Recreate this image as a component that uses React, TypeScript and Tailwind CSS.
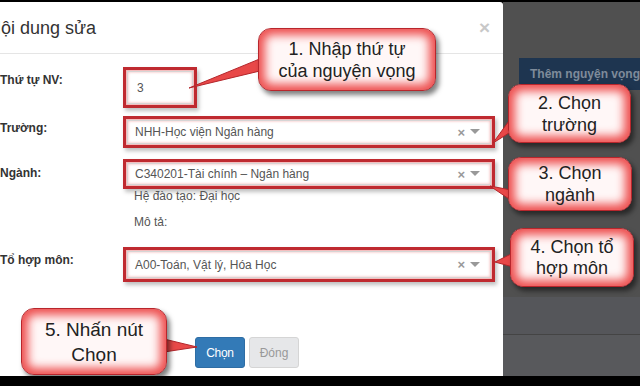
import React from "react";

function RedBox({ className, children }: { className: string; children?: React.ReactNode }) {
  return (
    <div
      className={
        "border-[3px] border-[#bf2a30] bg-white shadow-[inset_0_0_3px_2px_#f3b4b4,2px_3px_4px_rgba(0,0,0,0.25)] " +
        className
      }
    >
      {children}
    </div>
  );
}

function Select({ value, h }: { value: string; h: string }) {
  return (
    <RedBox className={"w-[372px] p-[1px] " + h}>
      <div className="h-full border border-[#d5d5d5] flex items-center pl-[7px] pr-[10px]">
        <span className="flex-1 text-[12px] text-[#555] whitespace-nowrap">{value}</span>
        <span className="text-[13px] font-bold text-[#999] leading-none mr-[5px]">×</span>
        <svg width="10" height="6" viewBox="0 0 10 6">
          <polygon points="0,0 10,0 5,5" fill="#999" />
        </svg>
      </div>
    </RedBox>
  );
}

function Callout({
  className,
  lines,
  text,
}: {
  className: string;
  lines: string[];
  text: string;
}) {
  return (
    <div
      className={
        "absolute z-20 rounded-[13px] border border-[#b8262c] bg-[#fff7f7] shadow-[inset_0_0_10px_6px_#ee5050,3px_4px_5px_rgba(0,0,0,0.5)] flex flex-col items-center justify-center text-[#222] " +
        text +
        " " +
        className
      }
    >
      {lines.map((l) => (
        <div key={l} className="whitespace-nowrap">
          {l}
        </div>
      ))}
    </div>
  );
}

export default function App() {
  return (
    <div className="relative w-[640px] h-[386px] bg-black overflow-hidden font-['Liberation_Sans',Arial,sans-serif]">
      <div className="h-[2px]" />
      <div className="flex h-[374px]">
        {/* Modal */}
        <div className="w-[516px] bg-white rounded-tr-[3px] flex flex-col">
          <div className="h-[52px] border-b border-[#e5e5e5] flex items-center justify-between pr-[13px]">
            <h4 className="ml-[-12px] text-[18px] text-[#333] leading-none whitespace-nowrap">Nội dung sửa</h4>
            <span className="text-[19px] font-bold text-[#c8c8c8] leading-none">×</span>
          </div>

          <div className="flex flex-col">
            {/* Row 1 */}
            <div className="flex mt-[13px]">
              <div className="w-[123px] pt-[5px] text-[12px] leading-[16px] font-bold text-[#333]">Thứ tự NV:</div>
              <RedBox className="w-[74px] h-[41px] p-[1px]">
                <div className="h-full border border-[#d5d5d5] flex items-center pl-[9px] text-[12px] text-[#555]">3</div>
              </RedBox>
            </div>
            {/* Row 2 */}
            <div className="flex mt-[8px]">
              <div className="w-[123px] pt-[4px] text-[12px] leading-[16px] font-bold text-[#333]">Trường:</div>
              <Select value="NHH-Học viện Ngân hàng" h="h-[32px]" />
            </div>
            {/* Row 3 */}
            <div className="flex mt-[11px]">
              <div className="w-[123px] pt-[6px] text-[12px] leading-[16px] font-bold text-[#333]">Ngành:</div>
              <div className="flex flex-col">
                <Select value="C340201-Tài chính – Ngân hàng" h="h-[30px]" />
                <div className="pl-[11px] text-[12px] leading-[14px] text-[#555] mt-[0px]">Hệ đào tạo: Đại học</div>
                <div className="pl-[11px] text-[12px] leading-[14px] text-[#555] mt-[12px]">Mô tả:</div>
              </div>
            </div>
            {/* Row 4 */}
            <div className="flex mt-[18px]">
              <div className="w-[123px] pt-[5px] text-[12px] leading-[16px] font-bold text-[#333]">Tổ hợp môn:</div>
              <Select value="A00-Toán, Vật lý, Hóa Học" h="h-[35px]" />
            </div>
            {/* Footer */}
            <div className="flex pl-[195px] mt-[55px] gap-[4px]">
              <div className="w-[50px] h-[31px] rounded-[3px] bg-[#337ab7] border border-[#2e6da4] text-white text-[12px] flex items-center justify-center tracking-[-0.3px]">
                Chọn
              </div>
              <div className="w-[50px] h-[31px] rounded-[3px] bg-[#e6e7e9] border border-[#d5d5d5] text-[#999] text-[12px] flex items-center justify-center">
                Đóng
              </div>
            </div>
          </div>
        </div>

        {/* Backdrop page */}
        <div className="flex-1 bg-[#505050] flex flex-col">
          <div className="h-[56px]" />
          <div className="ml-[16px] h-[32px] bg-[#1e3550] text-[#7e8b9a] font-bold text-[12px] pl-[11px] flex items-center whitespace-nowrap overflow-hidden">
            Thêm nguyện vọng
          </div>
          <div className="flex-1" />
          <div className="h-[37px] bg-[#55565a]" />
          <div className="h-[1px] bg-[#444]" />
          <div className="h-[41px] bg-[#58595c]" />
        </div>
      </div>

      {/* Tails */}
      <svg className="absolute left-0 top-0 z-10" width="640" height="386" viewBox="0 0 640 386">
        <g fill="#e84848" stroke="#b3262b" strokeWidth="1">
          <polygon points="262,58 264,70 189,88" />
          <polygon points="511,118 517,128 493,143" />
          <polygon points="511,190 512,201 490,186" />
          <polygon points="513,253 513,267 495,262" />
          <polygon points="164,339 164,352 197,347" />
        </g>
      </svg>

      <Callout
        className="left-[258px] top-[28px] w-[178px] h-[63px] leading-[22px]"
        text="text-[18px]"
        lines={["1. Nhập thứ tự", "của nguyện vọng"]}
      />
      <Callout
        className="left-[508px] top-[84px] w-[123px] h-[59px] leading-[22px]"
        text="text-[18px]"
        lines={["2. Chọn", "trường"]}
      />
      <Callout
        className="left-[508px] top-[157px] w-[124px] h-[54px] leading-[22px]"
        text="text-[18px]"
        lines={["3. Chọn", "ngành"]}
      />
      <Callout
        className="left-[510px] top-[228px] w-[124px] h-[59px] leading-[21px]"
        text="text-[18px]"
        lines={["4. Chọn tổ", "hợp môn"]}
      />
      <Callout
        className="left-[21px] top-[308px] w-[146px] h-[67px] leading-[25px]"
        text="text-[19px]"
        lines={["5. Nhấn nút", "Chọn"]}
      />
    </div>
  );
}
